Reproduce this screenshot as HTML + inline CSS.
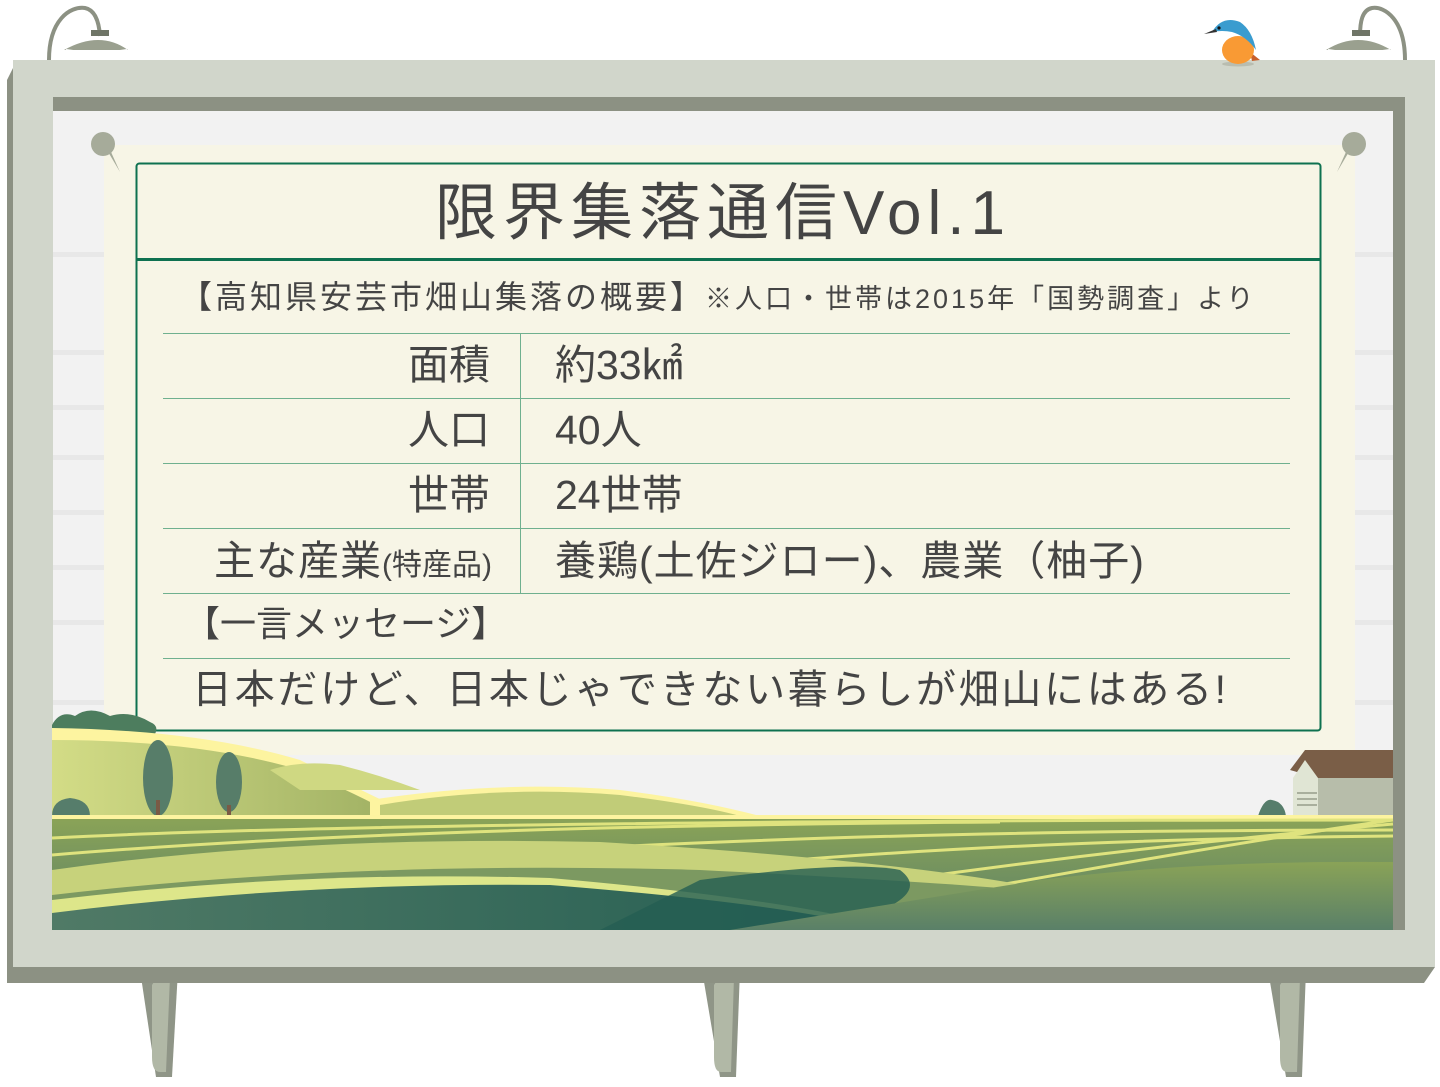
<!DOCTYPE html>
<html><head><meta charset="utf-8">
<style>
*{margin:0;padding:0;box-sizing:border-box}
body{width:1440px;height:1087px;background:#fff;position:relative;overflow:hidden;font-family:"Liberation Sans","Noto Sans CJK JP",sans-serif;color:#444}
.a{position:absolute}
.t{position:absolute;white-space:nowrap;line-height:1}
.hl{position:absolute;left:163px;width:1127px;height:1px;background:#6fb08f}
</style></head><body>
<svg class="a" style="left:0;top:0" width="1440" height="1087">
 <!-- lamps -->
 <path d="M49 60 C49 20 70 6 85 8 C95 10 99 22 100 36" fill="none" stroke="#8c9183" stroke-width="4"/>
 <path d="M91 30 h18 v6 h-18z" fill="#6f7567"/>
 <path d="M64 50 Q100 30 128 50 Z" fill="#9aa08f"/>
 <path d="M66 50 Q97 55 127 50" fill="none" stroke="#fff" stroke-width="2"/>
 <path d="M1405 60 C1405 20 1385 6 1372 8 C1362 10 1360 22 1360 36" fill="none" stroke="#8c9183" stroke-width="4"/>
 <path d="M1352 30 h18 v6 h-18z" fill="#6f7567"/>
 <path d="M1326 50 Q1358 30 1391 50 Z" fill="#9aa08f"/>
 <path d="M1328 50 Q1358 55 1390 50" fill="none" stroke="#fff" stroke-width="2"/>
 <!-- legs -->
 <g fill="#8f9587"><path d="M140 970 h38 l-6 107 h-16z"/><path d="M702 970 h38 l-4 107 h-16z"/><path d="M1268 970 h38 l-4 107 h-16z"/></g>
 <g fill="#b1b8a6"><path d="M152 985 q4 -8 18 -8 l-4 95 h-6 q-8 0 -8 -15z"/><path d="M714 985 q4 -8 20 -8 l-3 95 h-10 q-7 0 -7 -15z"/><path d="M1280 985 q4 -8 20 -8 l-3 95 h-10 q-7 0 -7 -15z"/></g>
 <!-- frame -->
 <path d="M7 80 L17 60 H1435 V967 L1424 983 H7 Z" fill="#8c9183"/>
 <rect x="13" y="60" width="1422" height="907" fill="#d1d6cb"/>
 <rect x="53" y="97" width="1352" height="833" fill="#8c9183"/>
 <rect x="53" y="111" width="1340" height="819" fill="#f2f2f2"/>
 <g fill="#e8e8e8"><rect x="53" y="252" width="1340" height="5"/><rect x="53" y="350" width="1340" height="5"/><rect x="53" y="405" width="1340" height="5"/><rect x="53" y="455" width="1340" height="5"/><rect x="53" y="510" width="1340" height="5"/><rect x="53" y="565" width="1340" height="5"/><rect x="53" y="620" width="1340" height="5"/><rect x="53" y="700" width="1340" height="5"/></g>
 <!-- bird -->
 <ellipse cx="1238" cy="64" rx="16" ry="2.5" fill="#b9bdb0"/>
 <path d="M1250 52 l10 8 l-8 1z" fill="#c8602c"/>
 <ellipse cx="1238" cy="50" rx="16" ry="14" fill="#f99a34"/>
 <path d="M1212 32 Q1222 15 1240 22 Q1252 30 1256 50 Q1246 36 1232 32 Q1222 30 1212 32Z" fill="#3a9ccf"/>
 <path d="M1204 34 l12 -5 l1 3z" fill="#333"/>
 <circle cx="1219" cy="28" r="1.6" fill="#111"/>
 <!-- paper -->
 <rect x="104" y="145" width="1251" height="610" fill="#f7f5e6"/>
 <circle cx="103" cy="144" r="12" fill="#a6ab9a"/><path d="M107 150 L120 172 L111 152z" fill="#a6ab9a"/>
 <circle cx="1354" cy="144" r="12" fill="#a6ab9a"/><path d="M1350 150 L1337 172 L1346 152z" fill="#a6ab9a"/>
 <rect x="136.5" y="163.5" width="1184" height="567" rx="3" fill="none" stroke="#0e7150" stroke-width="2"/>
 <rect x="137" y="258" width="1183" height="3" fill="#0e7150"/>
 <rect x="520" y="333" width="1" height="260" fill="#6fb08f"/>
 <!-- landscape -->
 <defs>
  <linearGradient id="g1" x1="0" x2="1"><stop offset="0" stop-color="#d3dc86"/><stop offset="1" stop-color="#9fb063"/></linearGradient>
  <linearGradient id="g2" x1="0" x2="0" y1="0" y2="1"><stop offset="0" stop-color="#8aa357"/><stop offset="1" stop-color="#5a8068"/></linearGradient>
  <linearGradient id="g3" x1="0" x2="1"><stop offset="0" stop-color="#507a66"/><stop offset="1" stop-color="#245e52"/></linearGradient>
 </defs>
 <path d="M52 725 Q60 710 75 716 Q90 705 110 716 Q130 710 150 722 Q165 728 145 745 H52Z" fill="#4d7d5e"/>
 <path d="M52 728 Q200 730 300 760 Q360 790 420 818 H52Z" fill="#fdf4a0"/>
 <path d="M52 740 Q200 740 300 770 Q360 795 400 818 H52Z" fill="url(#g1)"/>
 <path d="M270 770 Q300 760 340 765 Q380 775 420 790 H300Z" fill="#cfd882"/>
 <path d="M370 800 Q500 780 620 790 Q700 800 760 816 H370Z" fill="#fdf4a0"/>
 <path d="M380 805 Q500 785 620 795 Q700 805 740 816 H380Z" fill="#c1cc78"/>
 <path d="M1258 816 Q1264 798 1272 800 Q1284 802 1286 816Z" fill="#567d6b"/>
 <path d="M1290 770 L1305 750 H1393 V778 H1318Z" fill="#7a5e47"/>
 <path d="M1293 778 L1305 760 L1318 778 V816 H1293Z" fill="#e0e5d4"/>
 <rect x="1318" y="778" width="75" height="38" fill="#b7bdaa"/>
 <g fill="#a9af9d"><rect x="1297" y="792" width="20" height="2"/><rect x="1297" y="798" width="20" height="2"/><rect x="1297" y="804" width="20" height="2"/></g>
 <path d="M52 816 Q52 800 70 798 Q90 800 90 816Z" fill="#567d6b"/>
 <g fill="#577d69"><ellipse cx="158" cy="778" rx="15" ry="38"/><ellipse cx="229" cy="782" rx="13" ry="30"/></g>
 <g fill="#7a5a45"><rect x="156" y="800" width="4" height="16"/><rect x="227" y="805" width="4" height="11"/></g>
 <rect x="52" y="815" width="1341" height="4" fill="#fdf4a0"/>
 <rect x="52" y="819" width="1341" height="111" fill="url(#g2)"/>
 <g fill="none" stroke="#dfe37e" stroke-width="3">
  <path d="M52 838 Q400 820 1393 820"/><path d="M52 855 Q400 826 1000 822"/>
  <path d="M400 860 Q800 830 1393 830"/><path d="M700 868 Q1000 840 1393 836"/>
  <path d="M900 880 Q1150 845 1393 824"/><path d="M1000 885 Q1250 840 1393 820"/>
 </g>
 <path d="M52 870 Q300 835 600 842 Q900 860 1050 890 L800 895 Q500 860 52 900Z" fill="#c7d27b"/>
 <path d="M52 895 Q350 860 700 870 Q900 880 1000 888 L900 930 H52Z" fill="#7c9961"/>
 <path d="M52 900 Q300 870 550 878 Q800 900 900 930 H52Z" fill="#dde68a"/>
 <path d="M52 913 Q300 882 550 885 Q800 905 880 930 H52Z" fill="url(#g3)"/>
 <path d="M700 880 Q850 860 900 870 Q940 900 820 930 H600Z" fill="#245e52" opacity=".8"/>
 <path d="M730 930 L1040 880 Q1200 860 1393 862 V930Z" fill="url(#g2)"/>
</svg>
<div class="t" style="left:0;width:1440px;text-align:center;top:183px;font-size:62px;letter-spacing:6px;text-indent:6px;color:#444">限界集落通信Vol.1</div>
<div class="t" style="left:180px;top:281px;font-size:32px;letter-spacing:3px">【高知県安芸市畑山集落の概要】<span style="font-size:27px;letter-spacing:3px">※人口・世帯は2015年「国勢調査」より</span></div>
<div class="hl" style="top:333px"></div><div class="hl" style="top:398px"></div><div class="hl" style="top:463px"></div><div class="hl" style="top:528px"></div><div class="hl" style="top:593px"></div><div class="hl" style="top:658px"></div>
<div class="t" style="right:950px;top:345px;font-size:41px">面積</div>
<div class="t" style="left:555px;top:345px;font-size:41px">約33㎢</div>
<div class="t" style="right:950px;top:410px;font-size:41px">人口</div>
<div class="t" style="left:555px;top:410px;font-size:41px">40人</div>
<div class="t" style="right:950px;top:475px;font-size:41px">世帯</div>
<div class="t" style="left:555px;top:475px;font-size:41px">24世帯</div>
<div class="t" style="right:948px;top:541px;font-size:41px;letter-spacing:1px">主な産業<span style="font-size:30px;letter-spacing:0">(特産品)</span></div>
<div class="t" style="left:555px;top:541px;font-size:41px;letter-spacing:1px">養鶏(土佐ジロー)、農業（柚子)</div>
<div class="t" style="left:184px;top:606px;font-size:36px">【一言メッセージ】</div>
<div class="t" style="left:192px;top:670px;font-size:40px;letter-spacing:2.7px">日本だけど、日本じゃできない暮らしが畑山にはある!</div>
</body></html>
